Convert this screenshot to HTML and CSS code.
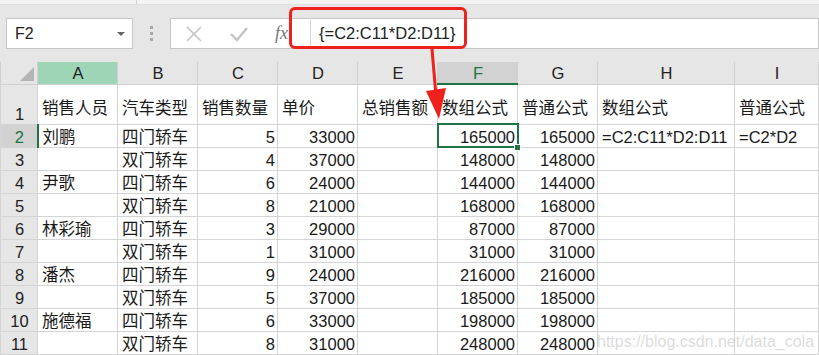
FILE: index.html
```html
<!DOCTYPE html>
<html lang="zh-CN">
<head>
    <meta charset="UTF-8">
    <title>数组公式</title>
    <link rel="stylesheet" href="styles.css">
</head>
<body>
    <div class="page">
        <div class="topband"><span class="tick"></span></div>
        <div class="formula-bar">
            <div class="name-box">
                <span>F2</span>
                <span class="caret"></span>
            </div>
            <div class="grip"><i></i><i></i><i></i></div>
            <div class="buttons">
                <svg width="18" height="18" viewBox="0 0 18 18"><path d="M2 2 L16 16 M16 2 L2 16" stroke="#c3c3c3" stroke-width="1.6" fill="none"/></svg>
                <svg width="20" height="18" viewBox="0 0 20 18"><path d="M2 9 L8 15 L18 3" stroke="#c3c3c3" stroke-width="2.4" fill="none"/></svg>
                <span class="fx">fx</span>
            </div>
            <div class="formula-input">
                <span class="formula-text">{=C2:C11*D2:D11}</span>
            </div>
        </div>
        <table class="sheet">
            <colgroup>
                <col class="c-rh"><col class="c-std"><col class="c-std"><col class="c-std"><col class="c-std">
                <col class="c-std"><col class="c-std"><col class="c-std"><col class="c-h"><col class="c-i">
            </colgroup>
            <thead>
                <tr class="colhead">
                    <th class="corner"><span class="tri"></span></th>
                    <th class="hl-a">A</th><th>B</th><th>C</th><th>D</th><th>E</th>
                    <th class="active-col">F</th><th>G</th><th>H</th><th>I</th>
                </tr>
            </thead>
            <tbody>
                <tr class="tall">
                    <th>1</th>
                    <td>销售人员</td><td>汽车类型</td><td>销售数量</td><td>单价</td><td>总销售额</td>
                    <td>数组公式</td><td>普通公式</td><td>数组公式</td><td>普通公式</td>
                </tr>
                <tr>
                    <th class="active-row">2</th>
                    <td>刘鹏</td><td>四门轿车</td><td class="n">5</td><td class="n">33000</td><td></td>
                    <td class="n selected">165000<span class="handle"></span></td><td class="n">165000</td><td>=C2:C11*D2:D11</td><td>=C2*D2</td>
                </tr>
                <tr>
                    <th>3</th>
                    <td></td><td>双门轿车</td><td class="n">4</td><td class="n">37000</td><td></td>
                    <td class="n">148000</td><td class="n">148000</td><td></td><td></td>
                </tr>
                <tr>
                    <th>4</th>
                    <td>尹歌</td><td>四门轿车</td><td class="n">6</td><td class="n">24000</td><td></td>
                    <td class="n">144000</td><td class="n">144000</td><td></td><td></td>
                </tr>
                <tr>
                    <th>5</th>
                    <td></td><td>双门轿车</td><td class="n">8</td><td class="n">21000</td><td></td>
                    <td class="n">168000</td><td class="n">168000</td><td></td><td></td>
                </tr>
                <tr>
                    <th>6</th>
                    <td>林彩瑜</td><td>四门轿车</td><td class="n">3</td><td class="n">29000</td><td></td>
                    <td class="n">87000</td><td class="n">87000</td><td></td><td></td>
                </tr>
                <tr>
                    <th>7</th>
                    <td></td><td>双门轿车</td><td class="n">1</td><td class="n">31000</td><td></td>
                    <td class="n">31000</td><td class="n">31000</td><td></td><td></td>
                </tr>
                <tr>
                    <th>8</th>
                    <td>潘杰</td><td>四门轿车</td><td class="n">9</td><td class="n">24000</td><td></td>
                    <td class="n">216000</td><td class="n">216000</td><td></td><td></td>
                </tr>
                <tr>
                    <th>9</th>
                    <td></td><td>双门轿车</td><td class="n">5</td><td class="n">37000</td><td></td>
                    <td class="n">185000</td><td class="n">185000</td><td></td><td></td>
                </tr>
                <tr>
                    <th>10</th>
                    <td>施德福</td><td>四门轿车</td><td class="n">6</td><td class="n">33000</td><td></td>
                    <td class="n">198000</td><td class="n">198000</td><td></td><td></td>
                </tr>
                <tr>
                    <th>11</th>
                    <td></td><td>双门轿车</td><td class="n">8</td><td class="n">31000</td><td></td>
                    <td class="n">248000</td><td class="n">248000</td><td></td><td></td>
                </tr>
            </tbody>
        </table>

        <!-- annotation drawn over the screenshot -->
        <div class="callout"></div>
        <svg class="arrow" width="819" height="355" viewBox="0 0 819 355">
            <path d="M432 49 L436 96" stroke="#f0201c" stroke-width="3" fill="none"/>
            <polygon points="426,91 446,88 439,119" fill="#f0201c"/>
        </svg>
        <div class="watermark">https://blog.csdn.net/data_cola</div>
    </div>
</body>
</html>
```

FILE: styles.css
```css
body {
    margin: 0;
    padding: 0;
    background-color: #fff;
    font-family: "Liberation Sans", "Noto Sans CJK SC", sans-serif;
    color: #1a1a1a;
}
.page {
    position: relative;
    width: 819px;
    height: 355px;
    overflow: hidden;
}
.topband {
    height: 4px;
    background-color: #f3f3f3;
    border-bottom: 1px solid #e0e0e0;
    position: relative;
}
.tick {
    position: absolute;
    left: 136px;
    top: 0;
    width: 1px;
    height: 4px;
    background-color: #d0d0d0;
}
.formula-bar {
    display: flex;
    align-items: center;
    height: 57px;
    background-color: #e6e6e6;
    padding-left: 6px;
    box-sizing: border-box;
    padding-bottom: 7px;
    padding-top: 7px;
}
.name-box {
    width: 127px;
    height: 31px;
    box-sizing: border-box;
    background-color: #fff;
    border: 1px solid #c6c6c6;
    display: flex;
    align-items: center;
    justify-content: space-between;
    padding: 0 7px 0 8px;
    font-size: 16px;
    color: #222;
}
.caret {
    width: 0;
    height: 0;
    border-left: 4px solid transparent;
    border-right: 4px solid transparent;
    border-top: 4px solid #666;
}
.grip {
    width: 37px;
    display: flex;
    flex-direction: column;
    align-items: center;
    gap: 3px;
}
.grip i {
    display: block;
    width: 3px;
    height: 3px;
    background-color: #a8a8a8;
}
.buttons {
    width: 140px;
    height: 31px;
    box-sizing: border-box;
    background-color: #fff;
    border: 1px solid #c6c6c6;
    border-right: none;
    display: flex;
    align-items: center;
    padding-left: 14px;
    gap: 26px;
}
.fx {
    font-family: "Liberation Serif", serif;
    font-style: italic;
    font-size: 18px;
    color: #777;
    margin-left: 0;
}
.formula-input {
    flex: 1;
    height: 31px;
    box-sizing: border-box;
    background-color: #fff;
    border: 1px solid #c6c6c6;
    border-left: 1px solid #d6d6d6;
    display: flex;
    align-items: center;
    padding-left: 8px;
}
.formula-text {
    font-size: 16.5px;
    color: #222;
}

/* sheet grid */
.sheet {
    border-collapse: collapse;
    table-layout: fixed;
    width: 818px;
    font-size: 16.5px;
}
.c-rh { width: 37px; }
.c-std { width: 80px; }
.c-h { width: 137px; }
.c-i { width: 84px; }
.sheet th,
.sheet td {
    border: 1px solid #d4d4d4;
    padding: 0 3px 0 4px;
    white-space: nowrap;
    overflow: visible;
    vertical-align: bottom;
    line-height: 20px;
}
.sheet td {
    text-align: left;
}
.sheet td.n {
    text-align: right;
    padding-right: 2px;
}
.colhead th {
    height: 21px;
    background-color: #e6e6e6;
    font-weight: normal;
    text-align: center;
    vertical-align: middle;
    border-color: #d0d0d0;
    border-top: none;
    color: #222;
}
.colhead th.hl-a {
    background-color: #9fd5b7;
}
.colhead th.active-col {
    background-color: #d2d2d2;
    border-bottom: 2px solid #217346;
    color: #217346;
}
.corner {
    position: relative;
}
.tri {
    position: absolute;
    right: 3px;
    bottom: 3px;
    width: 0;
    height: 0;
    border-left: 14px solid transparent;
    border-bottom: 14px solid #b4b4b4;
}
tbody th {
    background-color: #e6e6e6;
    font-weight: normal;
    text-align: center;
    border-color: #d0d0d0;
    border-left: none;
    color: #222;
    padding: 0;
}
tbody th.active-row {
    background-color: #d2d2d2;
    border-right: 2px solid #217346;
    color: #217346;
}
tbody tr {
    height: 23px;
}
tbody tr.tall {
    height: 40px;
}
tbody tr.tall td {
    padding-bottom: 6px;
}
.sheet td.selected {
    position: relative;
    outline: 2px solid #217346;
    outline-offset: -1px;
}
.handle {
    position: absolute;
    right: -4px;
    bottom: -4px;
    width: 5px;
    height: 5px;
    background-color: #217346;
    border: 1px solid #fff;
}

/* red annotation */
.callout {
    position: absolute;
    left: 289px;
    top: 7px;
    width: 178px;
    height: 42px;
    box-sizing: border-box;
    border: 3px solid #f0201c;
    border-radius: 6px;
}
.arrow {
    position: absolute;
    left: 0;
    top: 0;
}
.watermark {
    position: absolute;
    left: 597px;
    top: 333px;
    font-size: 16px;
    color: rgba(190, 190, 190, 0.55);
}
```
